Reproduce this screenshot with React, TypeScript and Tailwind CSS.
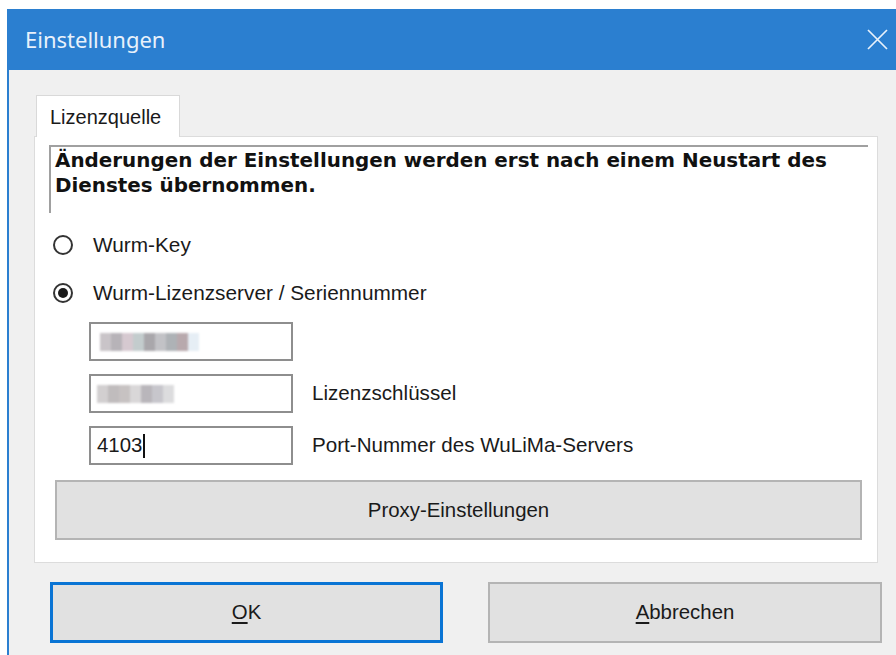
const ui = { fontFamily: '"Liberation Sans", Arial, sans-serif' };

// pixelated placeholder for the masked field values
const maskA = ['#c9c4c8', '#b7b3b8', '#d6c9d0', '#c3cccd', '#a9a7ab', '#c2c2c6', '#aeb2b6', '#b8a9ad', '#e6eef5'];
const maskB = ['#d2cfd0', '#c0bcbd', '#c7c2c2', '#d9d7d8', '#b9b6bb', '#c7c6cc', '#dcdcde'];

function Masked({ colors }: { colors: string[] }) {
  return (
    <div className="flex h-[18px] blur-[1px]">
      {colors.map((c, i) => (
        <div key={i} className="h-full w-[11px]" style={{ backgroundColor: c }} />
      ))}
    </div>
  );
}

function Radio({ checked, label }: { checked?: boolean; label: string }) {
  return (
    <div className="flex h-[30px] items-center">
      <span className="flex h-[20px] w-[20px] items-center justify-center rounded-full border-2 border-[#333333] bg-white">
        {checked && <span className="h-[10px] w-[10px] rounded-full bg-[#1a1a1a]" />}
      </span>
      <span className="ml-[20px] text-[20.8px] text-[#1a1a1a]">{label}</span>
    </div>
  );
}

function Field({ children, label }: { children: React.ReactNode; label?: string }) {
  return (
    <div className="flex items-center">
      <div className="flex h-[39px] w-[204px] items-center border-2 border-[#8e8e8e] bg-white pl-[6px]">
        {children}
      </div>
      {label && <span className="ml-[19px] text-[20.6px] text-[#1a1a1a]">{label}</span>}
    </div>
  );
}

export default function App() {
  return (
    <div className="h-[655px] w-[896px] overflow-hidden bg-white pl-[7px] pt-[9px]" style={ui}>
      <div className="flex h-full flex-col border-l-2 border-[#2b7fd0] bg-[#f0f0f0]">
        {/* title bar */}
        <div className="flex h-[61px] shrink-0 items-center justify-between bg-[#2b7fd0] pl-[16px] pr-[8px]">
          <span
            className="text-[22px] text-[#e8f1fb]"
            style={{ fontFamily: '"Noto Sans", "Open Sans", sans-serif' }}
          >
            Einstellungen
          </span>
          <svg width="21" height="21" viewBox="0 0 21 21" className="text-[#e8f1fb]">
            <path d="M1 1 L20 20 M20 1 L1 20" stroke="currentColor" strokeWidth="1.7" fill="none" />
          </svg>
        </div>

        {/* tab header */}
        <div className="ml-[27px] mt-[25px] flex">
          <div className="relative z-10 -mb-px flex h-[42px] w-[144px] items-center border border-b-0 border-[#d9d9d9] bg-white pl-[13px] text-[20px] text-[#1a1a1a]">
            Lizenzquelle
          </div>
        </div>

        {/* tab page */}
        <div className="ml-[25px] h-[427px] w-[844px] border border-[#dcdcdc] bg-white">
          <div
            className="ml-[14px] mt-[8px] h-[68px] w-[819px] border-l-2 border-t-2 border-[#a0a0a0] pl-[4px] pt-[1px] text-[19.9px] font-bold leading-[25px] text-[#111111]"
            style={{ fontFamily: '"DejaVu Sans", Verdana, sans-serif' }}
          >
            Änderungen der Einstellungen werden erst nach einem Neustart des
            <br />
            Dienstes übernommen.
          </div>

          <div className="ml-[18px] mt-[17px]">
            <Radio label="Wurm-Key" />
            <div className="mt-[18px]">
              <Radio checked label="Wurm-Lizenzserver / Seriennummer" />
            </div>
          </div>

          <div className="ml-[54px] mt-[14px] flex flex-col gap-[13px]">
            <Field>
              <div className="ml-[3px]">
                <Masked colors={maskA} />
              </div>
            </Field>
            <Field label="Lizenzschlüssel">
              <Masked colors={maskB} />
            </Field>
            <Field label="Port-Nummer des WuLiMa-Servers">
              <span className="text-[20.4px] text-[#1a1a1a]">4103</span>
              <span className="ml-px h-[24px] w-[2px] bg-[#111111]" />
            </Field>
          </div>

          <button className="ml-[20px] mt-[15px] flex h-[60px] w-[807px] items-center justify-center border-2 border-[#b4b4b4] bg-[#e1e1e1] text-[20.4px] text-[#1a1a1a]">
            Proxy-Einstellungen
          </button>
        </div>

        {/* dialog buttons */}
        <div className="ml-[41px] mt-[19px] flex gap-[45px]">
          <button className="flex h-[61px] w-[393px] items-center justify-center border-[3px] border-[#0a74d4] bg-[#e1e1e1] text-[20.4px] text-[#1a1a1a]">
            <span>
              <span className="underline underline-offset-[3px]">O</span>K
            </span>
          </button>
          <button className="flex h-[61px] w-[394px] items-center justify-center border-2 border-[#b4b4b4] bg-[#e1e1e1] text-[20.4px] text-[#1a1a1a]">
            <span>
              <span className="underline underline-offset-[3px]">A</span>bbrechen
            </span>
          </button>
        </div>
      </div>
    </div>
  );
}
